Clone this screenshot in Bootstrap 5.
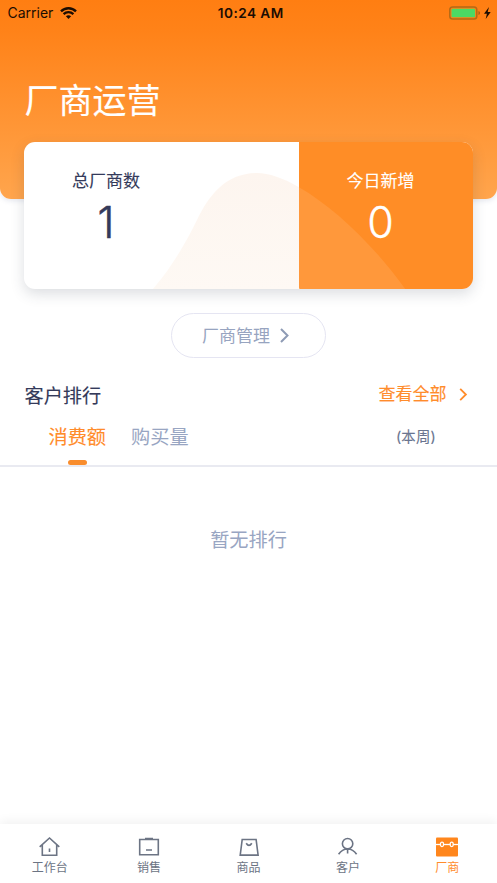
<!DOCTYPE html>
<html lang="zh-CN">
<head>
<meta charset="utf-8">
<meta name="viewport" content="width=device-width, initial-scale=1">
<title>厂商运营</title>
<link href="https://cdn.jsdelivr.net/npm/bootstrap@5.3.0/dist/css/bootstrap.min.css" rel="stylesheet">
<style>
body{font-family:"Inter","Noto Sans CJK SC",sans-serif;color:#343a5a;background:#fff;height:883px;overflow:hidden}
svg{display:block;flex:none}
.hero{height:199px;background:linear-gradient(#ff7e12 0,#ff8218 30px,#ffa54d 199px);border-radius:0 0 11px 11px;box-shadow:0 2px 5px rgba(90,100,150,.15)}
.status{height:26px;padding:0 5px 0 7.5px;font-size:14px;line-height:26px;color:#1c0d02}
.status>*{flex:1 1 0}
.wifi{margin-left:6.5px}
.clock{font-weight:600;font-size:13.6px;letter-spacing:.45px;padding-left:2px}
.page-title{font-size:34px;line-height:44px;margin:53px 0 0 24.5px;color:#fff;font-weight:400;-webkit-text-stroke:.15px}
.stats{height:147.5px;margin:-57.5px 24px 0;border-radius:11px;box-shadow:0 5px 14px rgba(50,60,80,.17)}
.hump{left:0;top:0}
.total{width:275px;padding-right:111px}
.today{background:#ff8d26;color:#fff;padding-right:11px;border-radius:0 11px 11px 3px}
.stat-name,.stat-num{position:relative;z-index:1}
.stat-name{font-size:17px;line-height:24px;margin-top:27px;-webkit-text-stroke:.12px}
.stat-num{font-size:43px;line-height:50px;margin-top:4.5px;font-weight:300;-webkit-text-stroke:.3px}
.total .stat-num{-webkit-text-stroke:.6px}
.manage{width:155px;height:45px;margin-top:24px;border:1px solid #e5e5f2;color:#97a4c0;font-size:17px;padding:0 6px 0 0;gap:10px}
.manage span{margin-top:2px}
.rank-head{height:28px;margin-top:22.5px;padding:0 29.5px 0 24.5px}
.rank-title{font-size:19.2px;line-height:28px;font-weight:400;-webkit-text-stroke:.12px;padding-top:2px}
.more{color:#ff8c2b;font-size:17px;-webkit-text-stroke:.15px;gap:12px}
.more span{padding-top:1px}
.tabs{height:58px;padding:0 61px 0 48.5px;border-bottom:2px solid #e9eaf1;font-size:19.2px}
.tabs .nav{gap:25px}
.tabs .nav-link{padding:0;line-height:28px;margin-top:14.5px;color:#98a5c2}
.tabs .nav-link.active{color:#ff8c2b;-webkit-text-stroke:.1px}
.tabs .nav-link.active::after{content:"";display:block;width:19px;height:5px;border-radius:2.5px;background:#f98d2d;margin:9px auto 0}
.week{font-size:14.4px;line-height:28px;margin-top:14px;color:#69748f;-webkit-text-stroke:.12px;letter-spacing:.2px}
.empty{font-size:19.2px;line-height:28px;margin-top:59px;color:#98a5c2}
.tabbar{height:59px;background:#fff;box-shadow:0 -3px 10px rgba(0,0,0,.055)}
.tabbar a{flex:1 1 0;color:#6c7484;font-size:12px;line-height:16px;padding-top:11px}
.tabbar a.active{color:#ff8c2b}
.tabbar svg{margin-bottom:2px}
</style>
</head>
<body class="d-flex flex-column">
<header class="hero">
  <div class="status d-flex align-items-center">
    <div class="d-flex align-items-center"><span>Carrier</span>
      <svg class="wifi" width="17" height="13" viewBox="0 0 17 13" fill="none" stroke="#1c0d02" stroke-width="2.3"><path d="M1 4.4C5 .2 12 .2 16 4.4M3.6 7.2c2.8-2.7 7-2.7 9.8 0"/><path d="M5.9 9.3c1.5-1.5 3.7-1.5 5.2 0L8.5 12z" fill="#1c0d02" stroke="none"/></svg>
    </div>
    <div class="clock text-center">10:24 AM</div>
    <div class="d-flex justify-content-end">
      <svg width="43" height="14" viewBox="0 0 43 14"><rect x=".8" y="1" width="27" height="12" rx="2.8" fill="none" stroke="#b36a16" stroke-width="1.5"/><rect x="2.5" y="2.7" width="23.6" height="8.6" rx="1.2" fill="#4cd964"/><path d="M29.5 5v4q1.5-.6 1.5-2t-1.5-2z" fill="#a35a15"/><path d="M40 1l-5 6.8h2.9L36.7 13l5-7h-3z" fill="#1c0d02"/></svg>
    </div>
  </div>
  <h1 class="page-title">厂商运营</h1>
</header>
<main class="flex-grow-1 d-flex flex-column">
  <section class="stats position-relative d-flex bg-white text-center">
    <div class="total flex-shrink-0"><div class="stat-name">总厂商数</div><div class="stat-num">1</div></div>
    <div class="today flex-grow-1"><div class="stat-name">今日新增</div><div class="stat-num">0</div></div>
    <svg class="hump position-absolute" width="449" height="147.5" viewBox="0 0 449 147.5">
      <defs>
        <linearGradient id="pale" x1="0" y1="0" x2="0" y2="1"><stop stop-color="#fdf5ef"/><stop offset="1" stop-color="#fef9f4"/></linearGradient>
        <clipPath id="left"><path d="M0 0h275v148H0z"/></clipPath><clipPath id="right"><path d="M275 0h174v148H278q-3 0-3-3z"/></clipPath>
        <path id="hill" d="M128 148C150 123 164 96 173 78C185 53 202 31 233 31C270 31 335 82 382 148z"/>
      </defs>
      <use href="#hill" clip-path="url(#left)" fill="url(#pale)"/>
      <use href="#hill" clip-path="url(#right)" fill="#ff983b"/>
    </svg>
  </section>
  <a class="manage btn rounded-pill bg-white align-self-center d-flex align-items-center justify-content-center flex-shrink-0" href="#"><span>厂商管理</span>
    <svg width="9" height="15" viewBox="0 0 9 15" fill="none" stroke="#8e9bb5" stroke-width="2"><path d="M1 1l6.5 6.5L1 14"/></svg></a>
  <div class="rank-head d-flex justify-content-between align-items-center">
    <h2 class="rank-title mb-0">客户排行</h2>
    <a class="more d-flex align-items-center text-decoration-none" href="#"><span>查看全部</span>
      <svg width="9" height="13" viewBox="0 0 9 13" fill="none" stroke="#ff8c2b" stroke-width="1.8"><path d="M1.2 .8l5.7 5.7-5.7 5.7"/></svg></a>
  </div>
  <div class="tabs d-flex justify-content-between">
    <nav class="nav"><a class="nav-link active" href="#">消费额</a><a class="nav-link" href="#">购买量</a></nav>
    <span class="week">(本周)</span>
  </div>
  <p class="empty text-center mb-0">暂无排行</p>
</main>
<footer class="tabbar d-flex flex-shrink-0">
  <a class="d-flex flex-column align-items-center text-decoration-none" href="#"><svg width="24" height="23" viewBox="0 0 24 23" fill="none" stroke="#6c7484" stroke-width="1.6"><path d="M1.7 11.8L11.5 3l9.8 8.8M4.3 9.8v10.5h14.4V9.8M11.5 13.5V17"/></svg>工作台</a>
  <a class="d-flex flex-column align-items-center text-decoration-none" href="#"><svg width="24" height="23" viewBox="0 0 24 23" fill="none" stroke="#6c7484" stroke-width="1.6"><path d="M2.7 4.5h18.6v15.3H2.7zM8 3.5h8M9 15h6"/></svg>销售</a>
  <a class="d-flex flex-column align-items-center text-decoration-none" href="#"><svg width="24" height="23" viewBox="0 0 24 23" fill="none" stroke="#6c7484" stroke-width="1.6"><path d="M5.2 4.5h13.9l2 15.6H3.2zM9.2 8.2q2.8 4.4 5.6 0"/></svg>商品</a>
  <a class="d-flex flex-column align-items-center text-decoration-none" href="#"><svg width="24" height="23" viewBox="0 0 24 23" fill="none" stroke="#6c7484" stroke-width="1.6"><circle cx="11.6" cy="8.7" r="5.2"/><path d="M2.6 19.3c2.5-3.8 5.7-5.3 9-5.3s6.5 1.5 9 5.3M11.6 14.5v4"/></svg>客户</a>
  <a class="active d-flex flex-column align-items-center text-decoration-none" href="#"><svg width="24" height="23" viewBox="0 0 24 23"><rect x="1" y="2.5" width="22" height="19" rx="1" fill="#ff861c"/><g fill="#ff861c" stroke="#fff" stroke-width="1.3"><path d="M1 9.5h22"/><rect x="5.5" y="7.2" width="3" height="4.4" rx="1.5"/><rect x="15.2" y="7.2" width="3" height="4.4" rx="1.5"/></g></svg>厂商</a>
</footer>
<script src="https://cdn.jsdelivr.net/npm/bootstrap@5.3.0/dist/js/bootstrap.bundle.min.js"></script>
</body>
</html>
